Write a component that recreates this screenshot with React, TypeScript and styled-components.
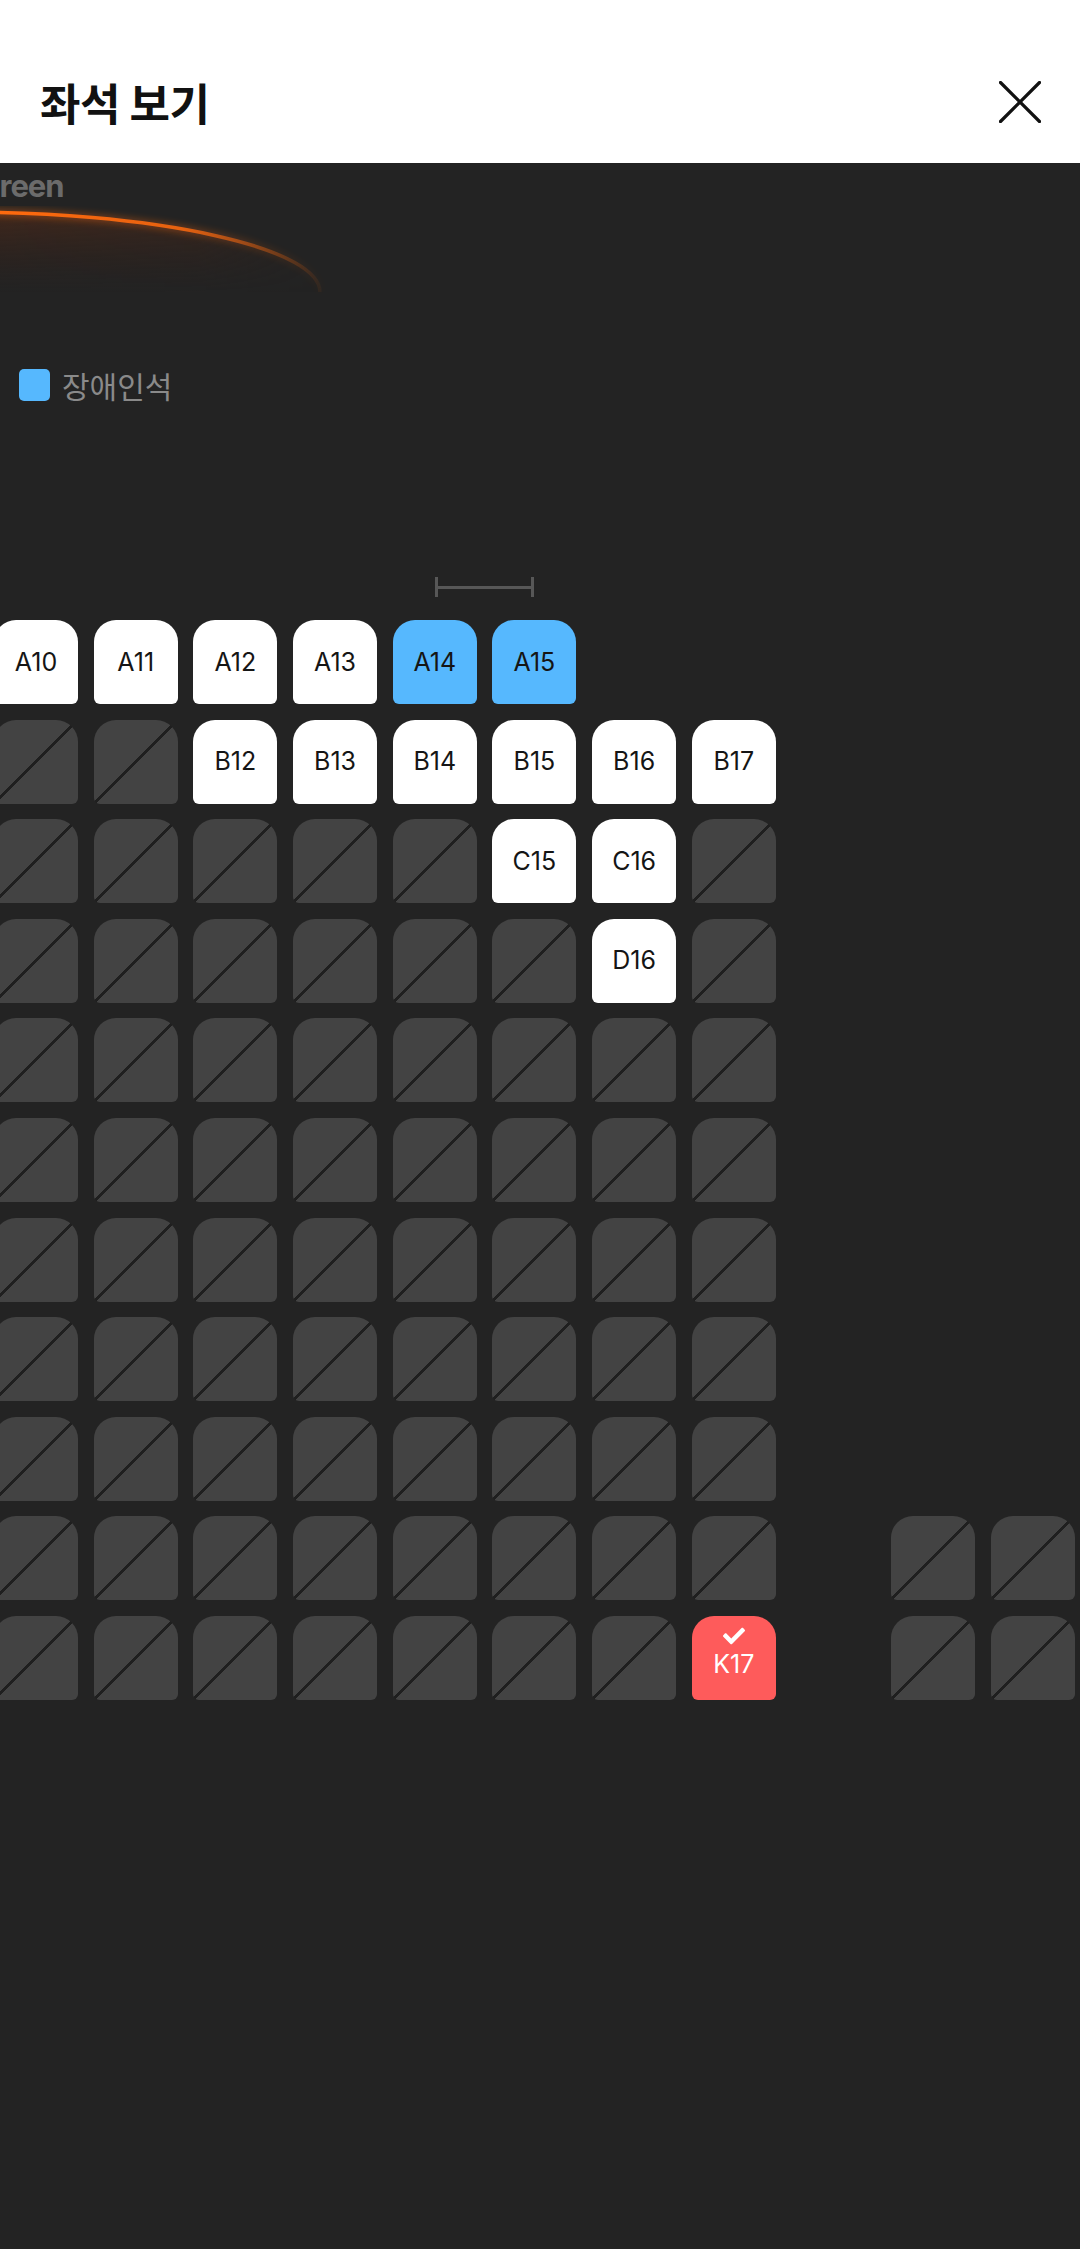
import React, { FC } from 'react'
import styled, { createGlobalStyle, css } from 'styled-components'
import { FaCheck } from 'react-icons/fa'

const GlobalStyle = createGlobalStyle`
	html, body {
		margin: 0;
		padding: 0;
		background: #232323;
	}
	body {
		font-family: Inter, "Noto Sans", "Noto Sans CJK KR", sans-serif;
	}
`

type SeatKind = 'open' | 'accessible' | 'blocked' | 'picked' | 'none'

const KIND_BY_CODE: Record<string, SeatKind> = {
	o: 'open',
	a: 'accessible',
	x: 'blocked',
	p: 'picked',
	'.': 'none',
}

// one string per row, one char per column (col 8 is the aisle)
const SEAT_ROWS: [string, string][] = [
	['A', 'ooooaa.....'],
	['B', 'xxoooooo...'],
	['C', 'xxxxxoox...'],
	['D', 'xxxxxxox...'],
	['E', 'xxxxxxxx...'],
	['F', 'xxxxxxxx...'],
	['G', 'xxxxxxxx...'],
	['H', 'xxxxxxxx...'],
	['I', 'xxxxxxxx...'],
	['J', 'xxxxxxxx.xx'],
	['K', 'xxxxxxxp.xx'],
]

const FIRST_SEAT_NO = 10

const Page = styled.div`
	width: 1080px;
	min-height: 2249px;
	background: #232323;
	overflow: hidden;
`

const Header = styled.header`
	height: 163px;
	box-sizing: border-box;
	padding: 40px 39px 0 40px;
	background: #fff;
	display: flex;
	align-items: center;
	justify-content: space-between;
`

const Title = styled.h1`
	margin: 0;
	font-family: "Noto Sans CJK KR", "Noto Sans", sans-serif;
	font-weight: 700;
	font-size: 44px;
	letter-spacing: -0.5px;
	color: #111;
`

const CloseButton = styled.button`
	width: 42px;
	height: 42px;
	padding: 0;
	border: 0;
	background: none;
	display: flex;
`

// the map is panned, so the start of the label sits past the left edge
const ScreenLabel = styled.div`
	margin: 3px 0 0 -37px;
	font-family: Inter, "Liberation Sans", sans-serif;
	font-weight: 700;
	font-size: 31px;
	letter-spacing: -1px;
	line-height: 40px;
	color: #6b6b6b;
`

const ScreenArc = styled.svg`
	display: block;
	width: 1080px;
	height: 109px;
`

const Legend = styled.div`
	margin-top: 54px;
	padding-left: 19px;
	display: flex;
	align-items: center;
	gap: 12px;
`

const LegendSwatch = styled.span<{ $color: string }>`
	width: 31px;
	height: 32px;
	border-radius: 5px;
	background: ${p => p.$color};
`

const LegendText = styled.span`
	font-family: "Noto Sans CJK KR", "Noto Sans", sans-serif;
	font-size: 30px;
	line-height: 32px;
	color: #8a8a8a;
`

const Spacing = styled.div`
	margin: 176px 0 0 435px;
	width: 99px;
	height: 20px;
	box-sizing: border-box;
	border-left: 3px solid #575757;
	border-right: 3px solid #575757;
	display: flex;
	align-items: center;

	&::after {
		content: '';
		flex: 1;
		height: 3px;
		background: #575757;
	}
`

const SeatGrid = styled.div`
	margin: 23px 0 0 -6px;
	display: grid;
	grid-template-columns: repeat(11, 84px);
	grid-auto-rows: 84px;
	column-gap: 15.7px;
	row-gap: 15.6px;
`

const seatLook = {
	open: css`
		background: #fff;
		color: #151515;
	`,
	accessible: css`
		background: #56b8fe;
		color: #151515;
	`,
	picked: css`
		background: #fe5b5b;
		color: #fff;
		justify-content: flex-start;
		padding-top: 9px;
		gap: 5px;
	`,
	blocked: css`
		background: linear-gradient(
				to bottom right,
				transparent calc(50% - 1.5px),
				#1f1f1f calc(50% - 1.5px),
				#1f1f1f calc(50% + 1px),
				transparent calc(50% + 1px)
			),
			#434343;
	`,
	none: css`
		background: transparent;
	`,
}

const Seat = styled.div<{ $kind: SeatKind }>`
	box-sizing: border-box;
	border-radius: 22px 22px 6px 6px;
	display: flex;
	flex-direction: column;
	align-items: center;
	justify-content: center;
	font-family: Inter, "Noto Sans", sans-serif;
	font-size: 25px;
	line-height: 25px;
	${p => seatLook[p.$kind]}
`

const CloseIcon: FC = () => (
	<svg width='42' height='42' viewBox='0 0 42 42'>
		<path d='M1.5 1.5 L40.5 40.5 M40.5 1.5 L1.5 40.5' stroke='#111' strokeWidth='3.2' strokeLinecap='round' />
	</svg>
)

// curved screen edge with its glow, drawn in page coordinates (top = 206px)
const ScreenCurve: FC = () => (
	<ScreenArc viewBox='0 0 1080 109'>
		<defs>
			<linearGradient id='edge' x1='0' y1='0' x2='330' y2='0' gradientUnits='userSpaceOnUse'>
				<stop offset='0' stopColor='#ff6a0e' />
				<stop offset='0.55' stopColor='#ff6a0e' stopOpacity='0.85' />
				<stop offset='1' stopColor='#ff6a0e' stopOpacity='0' />
			</linearGradient>
			<linearGradient id='glow' x1='0' y1='6' x2='0' y2='90' gradientUnits='userSpaceOnUse'>
				<stop offset='0' stopColor='#5c2c16' stopOpacity='0.55' />
				<stop offset='0.6' stopColor='#3e2318' stopOpacity='0.25' />
				<stop offset='1' stopColor='#2c2320' stopOpacity='0' />
			</linearGradient>
			<linearGradient id='glowFade' x1='0' y1='0' x2='330' y2='0' gradientUnits='userSpaceOnUse'>
				<stop offset='0' stopColor='#fff' />
				<stop offset='0.6' stopColor='#fff' stopOpacity='0.8' />
				<stop offset='1' stopColor='#fff' stopOpacity='0' />
			</linearGradient>
			<mask id='glowMask'>
				<rect x='0' y='0' width='1080' height='109' fill='url(#glowFade)' />
			</mask>
			<filter id='soft' x='-20%' y='-50%' width='140%' height='200%'>
				<feGaussianBlur stdDeviation='3' />
			</filter>
		</defs>
		<path d='M-400 86 A360 80 0 0 1 320 86 Z' fill='url(#glow)' mask='url(#glowMask)' />
		<path d='M-400 86 A360 80 0 0 1 320 86' fill='none' stroke='url(#edge)' strokeWidth='9' opacity='0.3' filter='url(#soft)' />
		<path d='M-400 86 A360 80 0 0 1 320 86' fill='none' stroke='url(#edge)' strokeWidth='3.5' />
	</ScreenArc>
)

const App: FC = () => (
	<Page>
		<GlobalStyle />
		<Header>
			<Title>좌석 보기</Title>
			<CloseButton aria-label='닫기'>
				<CloseIcon />
			</CloseButton>
		</Header>

		<ScreenLabel>Screen</ScreenLabel>
		<ScreenCurve />

		<Legend>
			<LegendSwatch $color='#56b8fe' />
			<LegendText>장애인석</LegendText>
		</Legend>

		<Spacing />

		<SeatGrid>
			{SEAT_ROWS.map(([row, codes]) =>
				codes.split('').map((code, i) => {
					const kind = KIND_BY_CODE[code]
					const label = `${row}${FIRST_SEAT_NO + i}`
					return (
						<Seat key={label} $kind={kind}>
							{kind === 'picked' && <FaCheck size={22} />}
							{(kind === 'open' || kind === 'accessible' || kind === 'picked') && label}
						</Seat>
					)
				})
			)}
		</SeatGrid>
	</Page>
)

export default App
